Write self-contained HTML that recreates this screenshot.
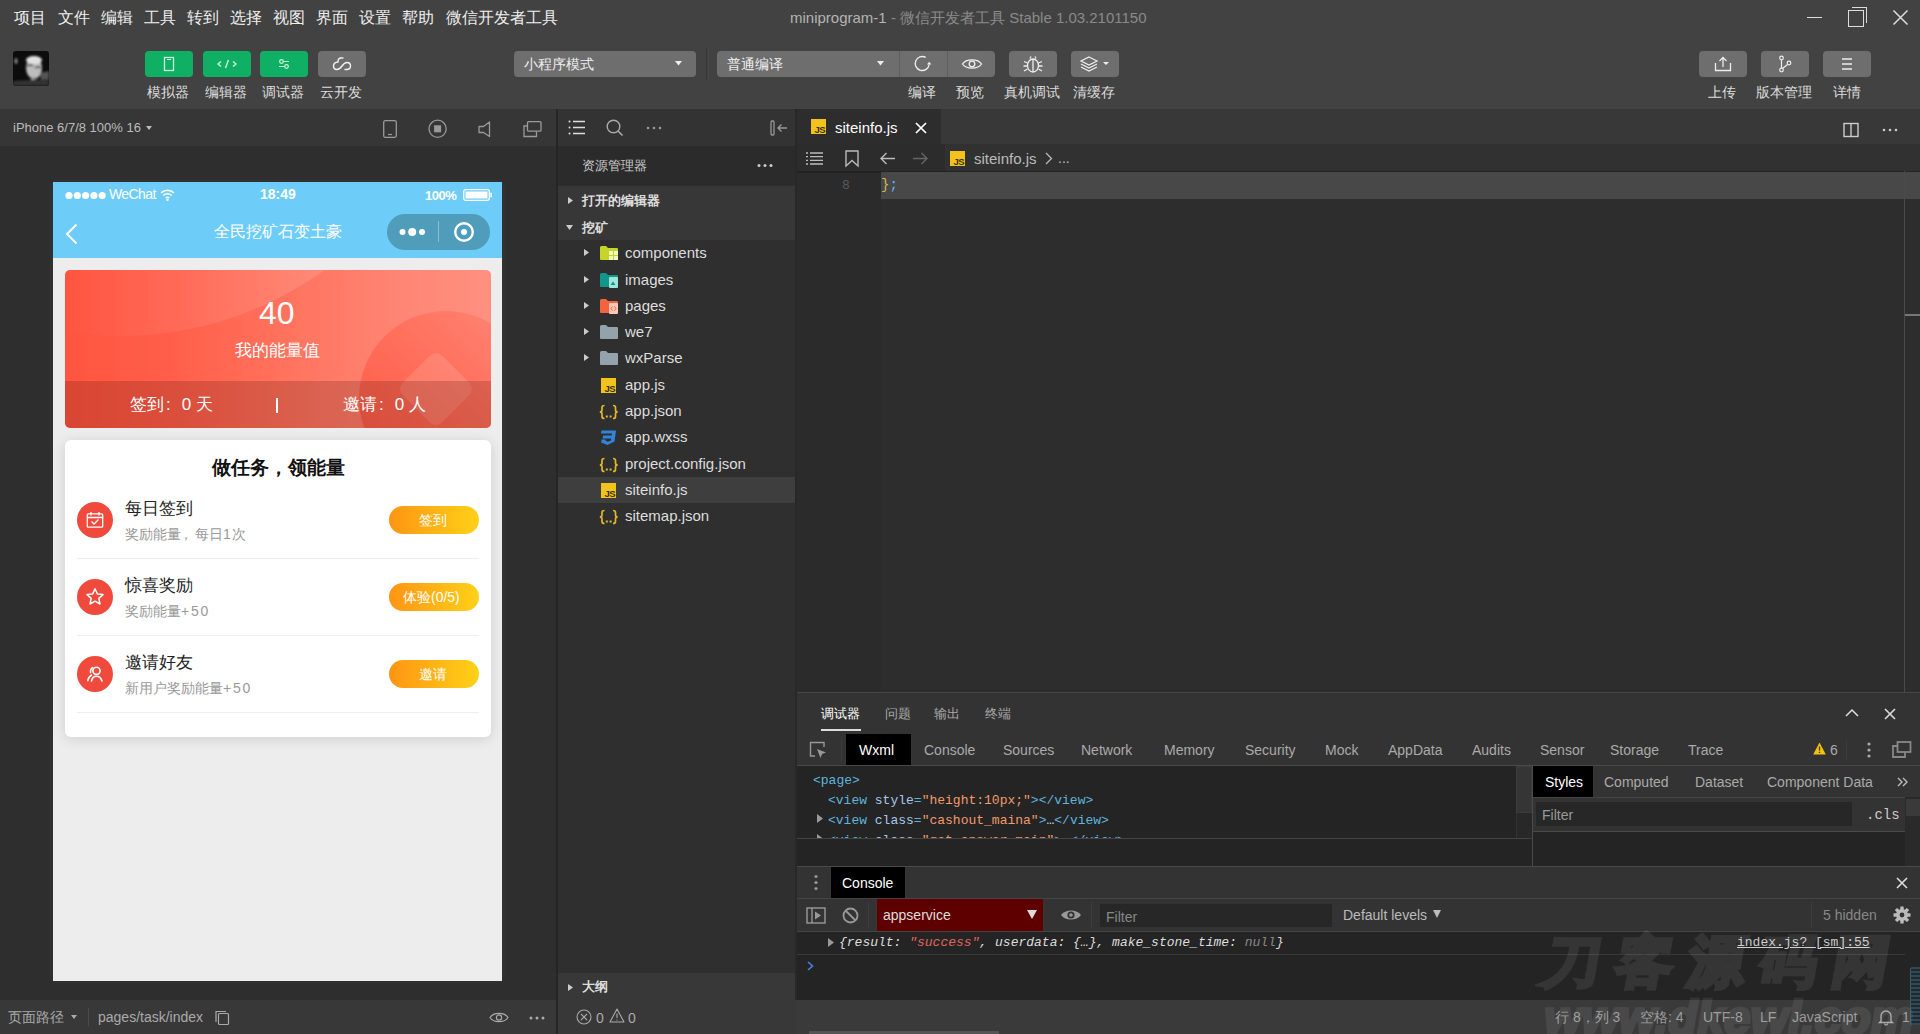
<!DOCTYPE html>
<html><head><meta charset="utf-8">
<style>
*{box-sizing:border-box;margin:0;padding:0}
html,body{width:1920px;height:1034px;overflow:hidden;background:#2d2d2d;font-family:"Liberation Sans",sans-serif;color:#ccc}
.a{position:absolute}
.t{position:absolute;white-space:nowrap;line-height:1}
svg.i{position:absolute;overflow:visible}
.menu{top:10px;font-size:15.8px;color:#eee}
.gbtn{position:absolute;top:51px;width:48px;height:26px;border-radius:4px;background:#10b064}
.hbtn{position:absolute;top:51px;height:26px;border-radius:4px;background:#6e6e6e}
.lbl{top:85px;font-size:14px;color:#ddd}
.mono{font-family:"Liberation Mono",monospace}
</style></head><body>
<!-- ============ TOP BAR ============ -->
<div class="a" style="left:0;top:0;width:1920px;height:109px;background:#424242"></div>
<div class="t menu" style="left:14px">项目</div>
<div class="t menu" style="left:58px">文件</div>
<div class="t menu" style="left:101px">编辑</div>
<div class="t menu" style="left:144px">工具</div>
<div class="t menu" style="left:187px">转到</div>
<div class="t menu" style="left:230px">选择</div>
<div class="t menu" style="left:273px">视图</div>
<div class="t menu" style="left:316px">界面</div>
<div class="t menu" style="left:359px">设置</div>
<div class="t menu" style="left:402px">帮助</div>
<div class="t menu" style="left:446px">微信开发者工具</div>
<div class="t" style="left:790px;top:10px;font-size:15px;color:#b4b4b4">miniprogram-1 <span style="color:#8a8a8a">- 微信开发者工具 Stable 1.03.2101150</span></div>
<!-- window controls -->
<div class="a" style="left:1807px;top:17px;width:15px;height:1px;background:#ddd"></div>
<div class="a" style="left:1848px;top:10px;width:16px;height:17px;border:1.5px solid #ddd"></div>
<div class="a" style="left:1852px;top:7px;width:15px;height:16px;border-top:1.5px solid #ddd;border-right:1.5px solid #ddd"></div>
<svg class="i" style="left:1893px;top:10px" width="15" height="15"><path d="M0.5 0.5L14.5 14.5M14.5 0.5L0.5 14.5" stroke="#ddd" stroke-width="1.5"/></svg>
<!-- avatar -->
<svg class="i" style="left:13px;top:51px" width="36" height="35"><defs><clipPath id="av"><rect width="36" height="35" rx="3"/></clipPath><filter id="bl"><feGaussianBlur stdDeviation="1.2"/></filter></defs><g clip-path="url(#av)"><rect width="36" height="35" fill="#0c0c0c"/><g filter="url(#bl)"><ellipse cx="21" cy="17" rx="8" ry="11" fill="#bdbdbd"/><ellipse cx="21" cy="9" rx="8" ry="4" fill="#e0e0e0"/><path d="M14 15Q18 13 20 15M22 17Q25 15 28 17" stroke="#333" stroke-width="1.5" fill="none"/><rect x="18" y="26" width="4" height="8" fill="#9a9a9a"/><path d="M27 22L36 20V28L28 30Z" fill="#555"/><path d="M0 30L36 28V35H0Z" fill="#333"/><ellipse cx="3" cy="10" rx="1.5" ry="3" fill="#888"/></g></g></svg>
<!-- green buttons -->
<div class="gbtn" style="left:145px"></div>
<div class="gbtn" style="left:203px"></div>
<div class="gbtn" style="left:260px"></div>
<div class="hbtn" style="left:318px;width:48px"></div>
<svg class="i" style="left:145px;top:51px" width="48" height="26"><rect x="19.5" y="6.5" width="9" height="13" fill="none" stroke="#c9f7de" stroke-width="1.3"/><line x1="22" y1="8.5" x2="26" y2="8.5" stroke="#c9f7de" stroke-width="1"/></svg>
<svg class="i" style="left:203px;top:51px" width="48" height="26"><path d="M18 10.5L15 13L18 15.5M30 10.5L33 13L30 15.5M25.5 9L22.5 17" fill="none" stroke="#c9f7de" stroke-width="1.4"/></svg>
<svg class="i" style="left:260px;top:51px" width="48" height="26"><path d="M19 10.5H29M19 15.5H29" stroke="#c9f7de" stroke-width="1.2"/><circle cx="21.5" cy="10.5" r="1.8" fill="#10b064" stroke="#c9f7de" stroke-width="1.2"/><circle cx="26.5" cy="15.5" r="1.8" fill="#10b064" stroke="#c9f7de" stroke-width="1.2"/></svg>
<svg class="i" style="left:316px;top:48px" width="52" height="32"><path d="M25 10Q22 10 22 14Q17.5 14.5 17.5 18Q17.5 21.5 21 21.5Q23.5 21.5 26 18Q28.5 14.5 31 14.5Q34.5 14.5 34.5 18Q34.5 21.5 30.5 21.5H28.5" fill="none" stroke="#f2f2f2" stroke-width="1.4" stroke-linejoin="round"/><path d="M24.5 10H27.5" stroke="#f2f2f2" stroke-width="1.4"/></svg>
<div class="t lbl" style="left:147px">模拟器</div>
<div class="t lbl" style="left:205px">编辑器</div>
<div class="t lbl" style="left:262px">调试器</div>
<div class="t lbl" style="left:320px">云开发</div>
<!-- mode dropdowns -->
<div class="hbtn" style="left:514px;width:182px"></div>
<div class="t" style="left:524px;top:57px;font-size:14px;color:#eee">小程序模式</div>
<svg class="i" style="left:675px;top:61px" width="7" height="5"><path d="M0 0H7L3.5 4.5Z" fill="#eee"/></svg>
<div class="a" style="left:706px;top:48px;width:1px;height:32px;background:#383838"></div><div class="a" style="left:708px;top:48px;width:1px;height:32px;background:#474747"></div>
<div class="hbtn" style="left:717px;width:278px"></div>
<div class="a" style="left:899px;top:51px;width:1px;height:26px;background:#5e5e5e"></div>
<div class="a" style="left:947px;top:51px;width:1px;height:26px;background:#5e5e5e"></div>
<div class="t" style="left:727px;top:57px;font-size:14px;color:#eee">普通编译</div>
<svg class="i" style="left:877px;top:61px" width="7" height="5"><path d="M0 0H7L3.5 4.5Z" fill="#eee"/></svg>
<svg class="i" style="left:914px;top:55px" width="20" height="18"><path d="M11.7 2.4A7 7 0 1 0 15.2 9.5" fill="none" stroke="#eee" stroke-width="1.3"/><path d="M15.2 6.8L13 9.6H17.4Z" fill="#eee"/></svg>
<svg class="i" style="left:961px;top:57px" width="22" height="14"><path d="M1.5 7C5 1.5 17 1.5 20.5 7C17 12.5 5 12.5 1.5 7Z" fill="none" stroke="#eee" stroke-width="1.3"/><circle cx="11" cy="7" r="2.8" fill="none" stroke="#eee" stroke-width="1.3"/></svg>
<div class="hbtn" style="left:1009px;width:48px"></div>
<svg class="i" style="left:1021px;top:54px" width="24" height="20"><ellipse cx="12" cy="11.5" rx="5.5" ry="6.5" fill="none" stroke="#eee" stroke-width="1.3"/><path d="M12 5V18M9 4.5L10 2.5M15 4.5L14 2.5M6.5 9L3 7.5M17.5 9L21 7.5M6.5 12H2.5M17.5 12H21.5M6.5 15L3 17M17.5 15L21 17" stroke="#eee" stroke-width="1.3"/></svg>
<div class="hbtn" style="left:1071px;width:48px"></div>
<svg class="i" style="left:1080px;top:55px" width="32" height="18"><path d="M9 2L17 6L9 10L1 6Z" fill="none" stroke="#eee" stroke-width="1.2"/><path d="M1 9L9 13L17 9M1 12L9 16L17 12" fill="none" stroke="#eee" stroke-width="1.2"/><path d="M23 7H29L26 10Z" fill="#eee"/></svg>
<div class="t lbl" style="left:908px">编译</div>
<div class="t lbl" style="left:956px">预览</div>
<div class="t lbl" style="left:1004px">真机调试</div>
<div class="t lbl" style="left:1073px">清缓存</div>
<!-- right buttons -->
<div class="hbtn" style="left:1699px;width:48px"></div>
<div class="hbtn" style="left:1761px;width:48px"></div>
<div class="hbtn" style="left:1823px;width:48px"></div>
<svg class="i" style="left:1699px;top:51px" width="48" height="26"><path d="M16.5 12V19.5H31.5V12M24 16V6.5M20.5 10L24 6.5L27.5 10" fill="none" stroke="#eee" stroke-width="1.3"/></svg>
<svg class="i" style="left:1761px;top:51px" width="48" height="26"><circle cx="20.5" cy="7" r="1.8" fill="none" stroke="#eee" stroke-width="1.2"/><circle cx="20.5" cy="19" r="1.8" fill="none" stroke="#eee" stroke-width="1.2"/><circle cx="28" cy="12" r="1.8" fill="none" stroke="#eee" stroke-width="1.2"/><path d="M20.5 9V17M21.5 17.5L26.5 13.5" stroke="#eee" stroke-width="1.2"/></svg>
<svg class="i" style="left:1823px;top:51px" width="48" height="26"><path d="M19 8H29M19 13H29M19 18H29" stroke="#eee" stroke-width="1.3"/></svg>
<div class="t lbl" style="left:1708px">上传</div>
<div class="t lbl" style="left:1756px">版本管理</div>
<div class="t lbl" style="left:1833px">详情</div>
<!-- ============ SIMULATOR ============ -->
<div class="a" style="left:0;top:109px;width:557px;height:891px;background:#2e2e2e"></div>
<div class="a" style="left:0;top:109px;width:557px;height:37px;background:#363636"></div>
<div class="a" style="left:556px;top:109px;width:2px;height:925px;background:#252525;z-index:2"></div>
<div class="t" style="left:13px;top:121px;font-size:13px;color:#bbb">iPhone 6/7/8 100% 16</div>
<svg class="i" style="left:146px;top:126px" width="6" height="5"><path d="M0 0H6L3 4Z" fill="#bbb"/></svg>
<svg class="i" style="left:383px;top:120px" width="14" height="18"><rect x="0.7" y="0.7" width="12.6" height="16.6" rx="1.5" fill="none" stroke="#9a9a9a" stroke-width="1.3"/><line x1="5" y1="14.5" x2="9" y2="14.5" stroke="#9a9a9a" stroke-width="1.2"/></svg>
<svg class="i" style="left:428px;top:119px" width="20" height="20"><circle cx="9.6" cy="9.8" r="8.6" fill="none" stroke="#9a9a9a" stroke-width="1.3"/><rect x="6.1" y="6.3" width="7" height="7" fill="#9a9a9a"/></svg>
<svg class="i" style="left:478px;top:121px" width="14" height="17"><path d="M11.5 1V15.5L5.5 11.5H1V5.5H5.5Z" fill="none" stroke="#9a9a9a" stroke-width="1.3" stroke-linejoin="round"/></svg>
<svg class="i" style="left:523px;top:121px" width="20" height="17"><rect x="4.5" y="0.7" width="13.5" height="9.5" rx="1" fill="none" stroke="#9a9a9a" stroke-width="1.3"/><path d="M4.5 5H1V15.5H13.5V10.5" fill="none" stroke="#9a9a9a" stroke-width="1.3"/></svg>
<!-- phone -->
<div class="a" style="left:53px;top:182px;width:449px;height:799px;background:#ededed;box-shadow:0 0 8px rgba(255,255,255,0.05)"></div>
<div class="a" style="left:53px;top:182px;width:449px;height:76px;background:#6ecdf8"></div>
<svg class="i" style="left:65px;top:191px" width="42" height="9"><circle cx="4" cy="4.5" r="3.6" fill="#fff"/><circle cx="12.3" cy="4.5" r="3.6" fill="#fff"/><circle cx="20.6" cy="4.5" r="3.6" fill="#fff"/><circle cx="28.9" cy="4.5" r="3.6" fill="#fff"/><circle cx="37.2" cy="4.5" r="3.6" fill="#fff"/></svg>
<div class="t" style="left:109px;top:187px;font-size:14px;color:#fff;letter-spacing:-0.6px">WeChat</div>
<svg class="i" style="left:160px;top:188px" width="15" height="13"><path d="M1 5A9 9 0 0 1 14 5M3.3 7.5A6 6 0 0 1 11.7 7.5M5.6 10A3 3 0 0 1 9.4 10" fill="none" stroke="#fff" stroke-width="1.6"/><circle cx="7.5" cy="11.8" r="1.2" fill="#fff"/></svg>
<div class="t" style="left:260px;top:187px;font-size:14px;color:#fff;font-weight:bold">18:49</div>
<div class="t" style="left:425px;top:189px;font-size:13px;color:#fff;font-weight:bold;letter-spacing:-0.5px">100%</div>
<svg class="i" style="left:463px;top:189px" width="30" height="12"><rect x="0.7" y="0.7" width="25.6" height="10.6" rx="2" fill="none" stroke="#fff" stroke-width="1.3"/><rect x="2.5" y="2.5" width="22" height="7" fill="#fff"/><rect x="27.2" y="3.8" width="1.8" height="4.4" fill="#fff"/></svg>
<svg class="i" style="left:65px;top:223px" width="13" height="22"><path d="M11.5 1.5L2 11L11.5 20.5" fill="none" stroke="#fff" stroke-width="2"/></svg>
<div class="t" style="left:214px;top:224px;font-size:15.6px;color:#fff">全民挖矿石变土豪</div>
<div class="a" style="left:387px;top:214px;width:103px;height:36px;border-radius:18px;background:#4f9cbb"></div>
<div class="a" style="left:438px;top:221px;width:1px;height:21px;background:rgba(255,255,255,0.35)"></div>
<svg class="i" style="left:399px;top:226px" width="30" height="12"><circle cx="3.5" cy="6" r="3" fill="#fff"/><circle cx="13.2" cy="6" r="4" fill="#fff"/><circle cx="23" cy="6" r="3" fill="#fff"/></svg>
<svg class="i" style="left:453px;top:221px" width="22" height="22"><circle cx="11" cy="11" r="8.8" fill="none" stroke="#fff" stroke-width="2.4"/><circle cx="11" cy="11" r="3" fill="#fff"/></svg>
<!-- red card -->
<div class="a" style="left:65px;top:270px;width:426px;height:158px;border-radius:5px;overflow:hidden;background:linear-gradient(90deg,#ff5540 0%,#ff5f4a 25%,#ff7560 55%,#ff8675 80%,#ff9080 100%)">
  <div class="a" style="left:-291px;top:-628px;width:694px;height:694px;border-radius:50%;background:linear-gradient(90deg,rgba(255,255,255,0) 42%,rgba(255,255,255,0.06) 55%,rgba(255,255,255,0.13) 80%)"></div>
  <div class="a" style="left:294px;top:41px;width:174px;height:174px;border-radius:50%;background:linear-gradient(45deg,#ff5843 0%,#ff6b57 45%,#ff8877 100%)"></div>
  <div class="a" style="left:343px;top:91px;width:56px;height:56px;transform:rotate(45deg);border-radius:9px;background:rgba(255,200,190,0.2)"></div>
  <div class="a" style="left:0;top:111px;width:426px;height:47px;background:rgba(70,10,0,0.20)"></div>
</div>
<div class="t" style="left:259px;top:297px;font-size:32px;color:#fff">40</div>
<div class="t" style="left:235px;top:342px;font-size:17px;color:#fff">我的能量值</div>
<div class="t" style="left:130px;top:396px;font-size:17px;color:#fff">签到<span style="margin-left:2px">:</span><span style="display:inline-block;margin-left:11px">0</span> 天</div>
<div class="a" style="left:276px;top:398px;width:2px;height:15px;background:#fff"></div>
<div class="t" style="left:343px;top:396px;font-size:17px;color:#fff">邀请<span style="margin-left:2px">:</span><span style="display:inline-block;margin-left:11px">0</span> 人</div>
<!-- task card -->
<div class="a" style="left:65px;top:440px;width:426px;height:297px;border-radius:6px;background:#fff;box-shadow:0 2px 14px rgba(0,0,0,0.13)"></div>
<div class="t" style="left:212px;top:458px;font-size:19px;color:#111;font-weight:bold">做任务<span style="letter-spacing:0">，</span>领能量</div>
<!-- row 1 -->
<div class="a" style="left:77px;top:502px;width:36px;height:36px;border-radius:50%;background:#ef4a3c"></div>
<svg class="i" style="left:86px;top:511px" width="18" height="18"><rect x="1.3" y="2.8" width="15.4" height="13.4" rx="1" fill="none" stroke="#fff" stroke-width="1.3"/><path d="M1.3 6.5H16.7M5 1V4.5M13 1V4.5M5.5 10.5L8 13L12.5 8.5" fill="none" stroke="#fff" stroke-width="1.3"/></svg>
<div class="t" style="left:125px;top:500px;font-size:16.5px;color:#222">每日签到</div>
<div class="t" style="left:125px;top:527px;font-size:14px;color:#999">奖励能量<span style="display:inline-block;width:14px;position:relative;left:-2px">，</span>每日<span style="letter-spacing:1px">1</span>次</div>
<div class="a" style="left:389px;top:506px;width:90px;height:28px;border-radius:14px;background:linear-gradient(90deg,#ff9513,#ffd118)"></div>
<div class="t" style="left:419px;top:513px;font-size:14px;color:#fff">签到</div>
<div class="a" style="left:77px;top:558px;width:402px;height:1px;background:#eee"></div>
<!-- row 2 -->
<div class="a" style="left:77px;top:579px;width:36px;height:36px;border-radius:50%;background:#ef4a3c"></div>
<svg class="i" style="left:85px;top:587px" width="20" height="20"><path d="M10 1.8L12.4 7L18 7.6L13.8 11.4L15 17L10 14.2L5 17L6.2 11.4L2 7.6L7.6 7Z" fill="none" stroke="#fff" stroke-width="1.5" stroke-linejoin="round"/></svg>
<div class="t" style="left:125px;top:577px;font-size:16.5px;color:#222">惊喜奖励</div>
<div class="t" style="left:125px;top:604px;font-size:14px;color:#999">奖励能量<span style="font-size:14px;letter-spacing:1.8px">+50</span></div>
<div class="a" style="left:389px;top:583px;width:90px;height:28px;border-radius:14px;background:linear-gradient(90deg,#ff9513,#ffd118)"></div>
<div class="t" style="left:403px;top:590px;font-size:14px;color:#fff">体验(0/5)</div>
<div class="a" style="left:77px;top:635px;width:402px;height:1px;background:#eee"></div>
<!-- row 3 -->
<div class="a" style="left:77px;top:656px;width:36px;height:36px;border-radius:50%;background:#ef4a3c"></div>
<svg class="i" style="left:85px;top:664px" width="20" height="20"><circle cx="11.5" cy="6.8" r="3.6" fill="none" stroke="#fff" stroke-width="1.6"/><path d="M6.5 17Q7.5 12.2 11.5 12.2Q15.5 12.2 17 17M7.6 3.6Q5 5 5.6 8.6M6.4 11.2Q3.4 12.8 2.8 16.6" fill="none" stroke="#fff" stroke-width="1.6" stroke-linecap="round"/></svg>
<div class="t" style="left:125px;top:654px;font-size:16.5px;color:#222">邀请好友</div>
<div class="t" style="left:125px;top:681px;font-size:14px;color:#999">新用户奖励能量<span style="font-size:14px;letter-spacing:1.8px">+50</span></div>
<div class="a" style="left:389px;top:660px;width:90px;height:28px;border-radius:14px;background:linear-gradient(90deg,#ff9513,#ffd118)"></div>
<div class="t" style="left:419px;top:667px;font-size:14px;color:#fff">邀请</div>
<div class="a" style="left:77px;top:712px;width:402px;height:1px;background:#eee"></div>
<!-- sim bottom bar -->
<div class="a" style="left:0;top:1000px;width:557px;height:34px;background:#383838"></div>
<div class="t" style="left:8px;top:1010px;font-size:14px;color:#aaa">页面路径</div>
<svg class="i" style="left:71px;top:1015px" width="6" height="5"><path d="M0 0H6L3 4Z" fill="#aaa"/></svg>
<div class="a" style="left:88px;top:1008px;width:1px;height:18px;background:#4a4a4a"></div>
<div class="t" style="left:98px;top:1010px;font-size:14px;color:#aaa">pages/task/index</div>
<svg class="i" style="left:215px;top:1010px" width="16" height="16"><rect x="3.5" y="3.5" width="10" height="11" rx="1" fill="none" stroke="#aaa" stroke-width="1.2"/><path d="M1 12V1.5H11" fill="none" stroke="#aaa" stroke-width="1.2"/></svg>
<svg class="i" style="left:489px;top:1011px" width="20" height="13"><path d="M1 6.5C4.5 1 15.5 1 19 6.5C15.5 12 4.5 12 1 6.5Z" fill="none" stroke="#aaa" stroke-width="1.2"/><circle cx="10" cy="6.5" r="2.6" fill="none" stroke="#aaa" stroke-width="1.2"/></svg>
<svg class="i" style="left:529px;top:1016px" width="16" height="4"><circle cx="2" cy="2" r="1.5" fill="#aaa"/><circle cx="8" cy="2" r="1.5" fill="#aaa"/><circle cx="14" cy="2" r="1.5" fill="#aaa"/></svg>
<!-- ============ EXPLORER ============ -->
<div class="a" style="left:557px;top:109px;width:239px;height:925px;background:#2f2f2f"></div>
<div class="a" style="left:557px;top:109px;width:239px;height:37px;background:#333"></div>
<div class="a" style="left:557px;top:146px;width:239px;height:39px;background:#2b2b2b"></div>
<div class="a" style="left:557px;top:186px;width:239px;height:54px;background:#373737"></div>
<svg class="i" style="left:568px;top:120px" width="18" height="15"><path d="M5 1.5H17M5 7.5H17M5 13.5H17" stroke="#ddd" stroke-width="1.4"/><circle cx="1.5" cy="1.5" r="1" fill="#ddd"/><circle cx="1.5" cy="7.5" r="1" fill="#ddd"/><circle cx="1.5" cy="13.5" r="1" fill="#ddd"/></svg>
<svg class="i" style="left:606px;top:119px" width="18" height="17"><circle cx="7.5" cy="7.5" r="6.3" fill="none" stroke="#aaa" stroke-width="1.4"/><path d="M12 12L16.5 16.5" stroke="#aaa" stroke-width="1.6"/></svg>
<svg class="i" style="left:646px;top:126px" width="16" height="4"><circle cx="2" cy="2" r="1.3" fill="#999"/><circle cx="8" cy="2" r="1.3" fill="#999"/><circle cx="14" cy="2" r="1.3" fill="#999"/></svg>
<svg class="i" style="left:770px;top:120px" width="18" height="16"><rect x="1" y="1" width="3" height="14" rx="1" fill="none" stroke="#999" stroke-width="1.3"/><path d="M17 8H8M11.5 4.5L8 8L11.5 11.5" fill="none" stroke="#999" stroke-width="1.3"/></svg>
<div class="t" style="left:582px;top:159px;font-size:13px;color:#ccc">资源管理器</div>
<svg class="i" style="left:757px;top:163px" width="16" height="5"><circle cx="2" cy="2.5" r="1.5" fill="#ccc"/><circle cx="8" cy="2.5" r="1.5" fill="#ccc"/><circle cx="14" cy="2.5" r="1.5" fill="#ccc"/></svg>
<svg class="i" style="left:568px;top:197px" width="5" height="7"><path d="M0 0L5 3.5L0 7Z" fill="#ccc"/></svg>
<div class="t" style="left:582px;top:194px;font-size:13px;color:#ddd;font-weight:bold">打开的编辑器</div>
<svg class="i" style="left:566px;top:225px" width="7" height="5"><path d="M0 0H7L3.5 5Z" fill="#ccc"/></svg>
<div class="t" style="left:582px;top:221px;font-size:13px;color:#ddd;font-weight:bold">挖矿</div>
<!-- tree -->
<div class="a" style="left:557px;top:477px;width:239px;height:26px;background:#3e3e3e"></div>
<svg class="i" style="left:584px;top:249px" width="5" height="7"><path d="M0 0L5 3.5L0 7Z" fill="#ccc"/></svg>
<svg class="i" style="left:584px;top:276px" width="5" height="7"><path d="M0 0L5 3.5L0 7Z" fill="#ccc"/></svg>
<svg class="i" style="left:584px;top:302px" width="5" height="7"><path d="M0 0L5 3.5L0 7Z" fill="#ccc"/></svg>
<svg class="i" style="left:584px;top:328px" width="5" height="7"><path d="M0 0L5 3.5L0 7Z" fill="#ccc"/></svg>
<svg class="i" style="left:584px;top:354px" width="5" height="7"><path d="M0 0L5 3.5L0 7Z" fill="#ccc"/></svg>
<!-- folder icons -->
<svg class="i" style="left:600px;top:246px" width="19" height="15"><path d="M0 1.5Q0 0 1.5 0H6L8 2H17Q18 2 18 3V13Q18 14 17 14H1Q0 14 0 13Z" fill="#c6d52e"/><rect x="9" y="5" width="4" height="4" fill="#f3f7c0"/><rect x="14" y="5" width="4" height="4" fill="#f3f7c0"/><rect x="9" y="10" width="4" height="4" fill="#f3f7c0"/><rect x="14" y="10" width="4" height="4" fill="#f3f7c0"/></svg>
<svg class="i" style="left:600px;top:273px" width="19" height="15"><path d="M0 1.5Q0 0 1.5 0H6L8 2H17Q18 2 18 3V13Q18 14 17 14H1Q0 14 0 13Z" fill="#12958a"/><rect x="9" y="4" width="9" height="11" rx="1" fill="#9ee6da"/><path d="M10.5 12L13 8.5L15.5 12Z" fill="#12958a"/></svg>
<svg class="i" style="left:600px;top:299px" width="19" height="15"><path d="M0 1.5Q0 0 1.5 0H6L8 2H17Q18 2 18 3V13Q18 14 17 14H1Q0 14 0 13Z" fill="#f2643e"/><rect x="9" y="4" width="9" height="11" rx="1" fill="#fcc7b5"/><path d="M12.5 7.5L11 9.5L12.5 11.5M14.5 7.5L16 9.5L14.5 11.5" fill="none" stroke="#f2643e" stroke-width="1"/></svg>
<svg class="i" style="left:600px;top:325px" width="19" height="15"><path d="M0 1.5Q0 0 1.5 0H6L8 2H17Q18 2 18 3V13Q18 14 17 14H1Q0 14 0 13Z" fill="#94a3ab"/></svg>
<svg class="i" style="left:600px;top:351px" width="19" height="15"><path d="M0 1.5Q0 0 1.5 0H6L8 2H17Q18 2 18 3V13Q18 14 17 14H1Q0 14 0 13Z" fill="#94a3ab"/></svg>
<!-- file icons -->
<svg class="i" style="left:601px;top:378px" width="15" height="15"><rect width="15" height="15" fill="#f2c31c"/><text x="14.2" y="13.8" font-size="9.5" font-family="Liberation Sans" font-weight="bold" fill="#3a3000" text-anchor="end" letter-spacing="-0.5">JS</text></svg>
<svg class="i" style="left:599px;top:404px" width="20" height="16"><path d="M5.5 1.5Q3 1.5 3 3.5V6Q3 8 0.8 8Q3 8 3 10V12.5Q3 14.5 5.5 14.5M14 1.5Q16.5 1.5 16.5 3.5V6Q16.5 8 18.7 8Q16.5 8 16.5 10V12.5Q16.5 14.5 14 14.5" fill="none" stroke="#e5b628" stroke-width="1.7"/><rect x="6.8" y="11.5" width="2" height="2" fill="#e5b628"/><rect x="10.6" y="11.5" width="2" height="2" fill="#e5b628"/></svg>
<svg class="i" style="left:600px;top:430px" width="17" height="16"><path d="M1.5 0.5H16L14.5 11.5L7.5 15L1 12.5L1.8 9.5H5.5L5.5 10.8L7.8 11.8L11 10.6L11.3 8.5H2.5L3.2 5.5H11.8L12.1 3.6H1Z" fill="#2f86d8"/></svg>
<svg class="i" style="left:599px;top:457px" width="20" height="16"><path d="M5.5 1.5Q3 1.5 3 3.5V6Q3 8 0.8 8Q3 8 3 10V12.5Q3 14.5 5.5 14.5M14 1.5Q16.5 1.5 16.5 3.5V6Q16.5 8 18.7 8Q16.5 8 16.5 10V12.5Q16.5 14.5 14 14.5" fill="none" stroke="#e5b628" stroke-width="1.7"/><rect x="6.8" y="11.5" width="2" height="2" fill="#e5b628"/><rect x="10.6" y="11.5" width="2" height="2" fill="#e5b628"/></svg>
<svg class="i" style="left:601px;top:483px" width="15" height="15"><rect width="15" height="15" fill="#f2c31c"/><text x="14.2" y="13.8" font-size="9.5" font-family="Liberation Sans" font-weight="bold" fill="#3a3000" text-anchor="end" letter-spacing="-0.5">JS</text></svg>
<svg class="i" style="left:599px;top:509px" width="20" height="16"><path d="M5.5 1.5Q3 1.5 3 3.5V6Q3 8 0.8 8Q3 8 3 10V12.5Q3 14.5 5.5 14.5M14 1.5Q16.5 1.5 16.5 3.5V6Q16.5 8 18.7 8Q16.5 8 16.5 10V12.5Q16.5 14.5 14 14.5" fill="none" stroke="#e5b628" stroke-width="1.7"/><rect x="6.8" y="11.5" width="2" height="2" fill="#e5b628"/><rect x="10.6" y="11.5" width="2" height="2" fill="#e5b628"/></svg>
<div class="t" style="left:625px;top:245px;font-size:15px;color:#ddd">components</div>
<div class="t" style="left:625px;top:272px;font-size:15px;color:#ddd">images</div>
<div class="t" style="left:625px;top:298px;font-size:15px;color:#ddd">pages</div>
<div class="t" style="left:625px;top:324px;font-size:15px;color:#ddd">we7</div>
<div class="t" style="left:625px;top:350px;font-size:15px;color:#ddd">wxParse</div>
<div class="t" style="left:625px;top:377px;font-size:15px;color:#ddd">app.js</div>
<div class="t" style="left:625px;top:403px;font-size:15px;color:#ddd">app.json</div>
<div class="t" style="left:625px;top:429px;font-size:15px;color:#ddd">app.wxss</div>
<div class="t" style="left:625px;top:456px;font-size:15px;color:#ddd">project.config.json</div>
<div class="t" style="left:625px;top:482px;font-size:15px;color:#ddd">siteinfo.js</div>
<div class="t" style="left:625px;top:508px;font-size:15px;color:#ddd">sitemap.json</div>
<!-- outline -->
<div class="a" style="left:557px;top:973px;width:239px;height:27px;background:#383838"></div>
<svg class="i" style="left:568px;top:984px" width="5" height="7"><path d="M0 0L5 3.5L0 7Z" fill="#ccc"/></svg>
<div class="t" style="left:582px;top:980px;font-size:13px;color:#ddd;font-weight:bold">大纲</div>
<div class="a" style="left:557px;top:1000px;width:239px;height:34px;background:#383838"></div>
<svg class="i" style="left:576px;top:1009px" width="16" height="16"><circle cx="8" cy="8" r="7" fill="none" stroke="#aaa" stroke-width="1.1"/><path d="M5 5L11 11M11 5L5 11" stroke="#aaa" stroke-width="1.1"/></svg>
<div class="t" style="left:596px;top:1011px;font-size:14px;color:#aaa">0</div>
<svg class="i" style="left:609px;top:1008px" width="16" height="16"><path d="M8 1L15 14H1Z" fill="none" stroke="#aaa" stroke-width="1.1" stroke-linejoin="round"/><path d="M8 5.5V10M8 11.5V12.5" stroke="#aaa" stroke-width="1.1"/></svg>
<div class="t" style="left:628px;top:1011px;font-size:14px;color:#aaa">0</div>
<!-- ============ EDITOR ============ -->
<div class="a" style="left:795px;top:109px;width:2px;height:891px;background:#282828;z-index:1"></div>
<div class="a" style="left:796px;top:109px;width:1124px;height:583px;background:#2d2d2d"></div>
<div class="a" style="left:796px;top:109px;width:1124px;height:35px;background:#383838"></div>
<div class="a" style="left:797px;top:109px;width:144px;height:35px;background:#2d2d2d"></div>
<svg class="i" style="left:811px;top:119px" width="15" height="15"><rect width="15" height="15" fill="#f2c31c"/><text x="14.2" y="13.8" font-size="9.5" font-family="Liberation Sans" font-weight="bold" fill="#3a3000" text-anchor="end" letter-spacing="-0.5">JS</text></svg>
<div class="t" style="left:835px;top:120px;font-size:15px;color:#fff">siteinfo.js</div>
<svg class="i" style="left:915px;top:122px" width="12" height="12"><path d="M1 1L11 11M11 1L1 11" stroke="#fff" stroke-width="1.7"/></svg>
<svg class="i" style="left:1843px;top:122px" width="16" height="16"><rect x="1" y="1.5" width="14" height="13" fill="none" stroke="#ccc" stroke-width="1.4"/><path d="M8 1.5V14.5" stroke="#ccc" stroke-width="1.4"/></svg>
<svg class="i" style="left:1882px;top:128px" width="16" height="4"><circle cx="2" cy="2" r="1.3" fill="#ccc"/><circle cx="8" cy="2" r="1.3" fill="#ccc"/><circle cx="14" cy="2" r="1.3" fill="#ccc"/></svg>
<div class="a" style="left:797px;top:144px;width:1123px;height:27px;background:#313131"></div>
<div class="a" style="left:797px;top:144px;width:148px;height:27px;background:#2c2c2c"></div>
<svg class="i" style="left:806px;top:152px" width="18" height="13"><path d="M4 1H17M4 4.7H17M4 8.3H17M4 12H17" stroke="#bbb" stroke-width="1.3"/><path d="M0 1H2M0 4.7H2M0 8.3H2M0 12H2" stroke="#bbb" stroke-width="1.3"/></svg>
<svg class="i" style="left:845px;top:150px" width="14" height="17"><path d="M1 1H13V16L7 10.5L1 16Z" fill="none" stroke="#bbb" stroke-width="1.4"/></svg>
<svg class="i" style="left:879px;top:152px" width="17" height="13"><path d="M16 6.5H2M7.5 1L2 6.5L7.5 12" fill="none" stroke="#bbb" stroke-width="1.4"/></svg>
<svg class="i" style="left:912px;top:152px" width="17" height="13"><path d="M1 6.5H15M9.5 1L15 6.5L9.5 12" fill="none" stroke="#666" stroke-width="1.4"/></svg>
<svg class="i" style="left:950px;top:151px" width="15" height="15"><rect width="15" height="15" fill="#f2c31c"/><text x="14.2" y="13.8" font-size="9.5" font-family="Liberation Sans" font-weight="bold" fill="#3a3000" text-anchor="end" letter-spacing="-0.5">JS</text></svg>
<div class="t" style="left:974px;top:151px;font-size:15px;color:#bbb">siteinfo.js</div>
<svg class="i" style="left:1045px;top:152px" width="8" height="13"><path d="M1 1L6.5 6.5L1 12" fill="none" stroke="#bbb" stroke-width="1.3"/></svg>
<div class="t" style="left:1058px;top:151px;font-size:14px;color:#bbb">...</div>
<div class="a" style="left:797px;top:171px;width:84px;height:521px;background:#2b2b2b"></div>
<div class="a" style="left:797px;top:171px;width:1123px;height:2px;background:rgba(0,0,0,0.22)"></div>
<div class="a" style="left:881px;top:172px;width:1039px;height:27px;background:#484848"></div>
<div class="t mono" style="left:842px;top:179px;font-size:13px;color:#5a5a5a">8</div>
<div class="t mono" style="left:881px;top:178px;font-size:14px;color:#d4b756">}<span style="color:#69b4f0">;</span></div>
<div class="a" style="left:1904px;top:171px;width:1px;height:521px;background:#4a4a4a"></div>
<div class="a" style="left:1905px;top:314px;width:15px;height:2px;background:#777"></div>

<!-- ============ DEBUGGER ============ -->
<div class="a" style="left:796px;top:692px;width:1124px;height:342px;background:#333"></div>
<div class="a" style="left:796px;top:692px;width:1124px;height:1px;background:#464646"></div>
<div class="t" style="left:821px;top:707px;font-size:13px;color:#fff">调试器</div>
<div class="t" style="left:885px;top:707px;font-size:13px;color:#aaa">问题</div>
<div class="t" style="left:934px;top:707px;font-size:13px;color:#aaa">输出</div>
<div class="t" style="left:985px;top:707px;font-size:13px;color:#aaa">终端</div>
<div class="a" style="left:821px;top:729px;width:40px;height:2px;background:#ddd"></div>
<svg class="i" style="left:1845px;top:708px" width="14" height="9"><path d="M1 8L7 2L13 8" fill="none" stroke="#ddd" stroke-width="1.5"/></svg>
<svg class="i" style="left:1884px;top:708px" width="12" height="12"><path d="M1 1L11 11M11 1L1 11" stroke="#ddd" stroke-width="1.6"/></svg>
<!-- devtools tabs -->
<div class="a" style="left:797px;top:765px;width:1123px;height:1px;background:#494949"></div>
<svg class="i" style="left:809px;top:741px" width="19" height="19"><path d="M6 15H1.5V1.5H15V6" fill="none" stroke="#999" stroke-width="1.4"/><path d="M8 8L17 11.5L13 13L11.5 17Z" fill="#999"/></svg>
<div class="a" style="left:841px;top:738px;width:1px;height:24px;background:#3c3c3c"></div>
<div class="a" style="left:846px;top:734px;width:65px;height:31px;background:#000"></div>
<div class="t" style="left:859px;top:743px;font-size:14px;color:#fff">Wxml</div>
<div class="t" style="left:924px;top:743px;font-size:14px;color:#aaa">Console</div>
<div class="t" style="left:1003px;top:743px;font-size:14px;color:#aaa">Sources</div>
<div class="t" style="left:1081px;top:743px;font-size:14px;color:#aaa">Network</div>
<div class="t" style="left:1164px;top:743px;font-size:14px;color:#aaa">Memory</div>
<div class="t" style="left:1245px;top:743px;font-size:14px;color:#aaa">Security</div>
<div class="t" style="left:1325px;top:743px;font-size:14px;color:#aaa">Mock</div>
<div class="t" style="left:1388px;top:743px;font-size:14px;color:#aaa">AppData</div>
<div class="t" style="left:1472px;top:743px;font-size:14px;color:#aaa">Audits</div>
<div class="t" style="left:1540px;top:743px;font-size:14px;color:#aaa">Sensor</div>
<div class="t" style="left:1610px;top:743px;font-size:14px;color:#aaa">Storage</div>
<div class="t" style="left:1688px;top:743px;font-size:14px;color:#aaa">Trace</div>
<svg class="i" style="left:1813px;top:742px" width="13" height="13"><path d="M6.5 0.5L12.8 12.5H0.2Z" fill="#f4c20d"/><path d="M6.5 4.5V8.5M6.5 9.8V11" stroke="#333" stroke-width="1.3"/></svg>
<div class="t" style="left:1830px;top:743px;font-size:14px;color:#aaa">6</div>
<div class="a" style="left:1846px;top:740px;width:1px;height:20px;background:#3c3c3c"></div>
<svg class="i" style="left:1867px;top:742px" width="4" height="16"><circle cx="2" cy="2" r="1.6" fill="#aaa"/><circle cx="2" cy="8" r="1.6" fill="#aaa"/><circle cx="2" cy="14" r="1.6" fill="#aaa"/></svg>
<svg class="i" style="left:1892px;top:741px" width="20" height="18"><rect x="5.5" y="1" width="13" height="10" fill="none" stroke="#888" stroke-width="1.8"/><path d="M5.5 5H1V16H13V11" fill="none" stroke="#888" stroke-width="1.8"/></svg>
<!-- wxml tree -->
<div class="a" style="left:797px;top:766px;width:736px;height:100px;background:#242424"></div>

<div class="a" style="left:797px;top:838px;width:736px;height:1px;background:#444"></div>
<div class="a" style="left:1516px;top:766px;width:16px;height:72px;background:#282828;border-left:1px solid #333"></div>
<div class="a" style="left:1516px;top:766px;width:16px;height:47px;background:#353535;border:1px solid #3c3c3c"></div>
<div class="a" style="left:1532px;top:766px;width:1px;height:100px;background:#4a4a4a"></div>
<div style="position:absolute;left:797px;top:768px;width:719px;height:70px;overflow:hidden">
<div class="t mono" style="left:16px;top:6px;font-size:13px;color:#5fb4dc">&lt;page&gt;</div>
<div class="t mono" style="left:31px;top:26px;font-size:13px;color:#5fb4dc">&lt;view <span style="color:#a9c7e8">style</span>=<span style="color:#f29a6a">"height:10px;"</span>&gt;&lt;/view&gt;</div>
<div class="t mono" style="left:31px;top:46px;font-size:13px;color:#5fb4dc">&lt;view <span style="color:#a9c7e8">class</span>=<span style="color:#f29a6a">"cashout_maina"</span>&gt;<span style="color:#ddd">…</span>&lt;/view&gt;</div>
<div class="t mono" style="left:31px;top:66px;font-size:13px;color:#5fb4dc">&lt;view <span style="color:#a9c7e8">class</span>=<span style="color:#f29a6a">"get_answer_main"</span>&gt;<span style="color:#ddd">…</span>&lt;/view&gt;</div>
<svg class="i" style="left:20px;top:46px" width="6" height="8"><path d="M0 0L6 4.5L0 9Z" fill="#999"/></svg>
<svg class="i" style="left:20px;top:66px" width="6" height="8"><path d="M0 0L6 4.5L0 9Z" fill="#999"/></svg>
</div>
<!-- styles pane -->
<div class="a" style="left:1533px;top:766px;width:372px;height:100px;background:#242424"></div>
<div class="a" style="left:1533px;top:766px;width:372px;height:65px;background:#333"></div>
<div class="a" style="left:1533px;top:797px;width:372px;height:1px;background:#444"></div>
<div class="a" style="left:1533px;top:831px;width:372px;height:1px;background:#4a4a4a"></div>
<div class="a" style="left:1533px;top:766px;width:60px;height:31px;background:#000"></div>
<div class="t" style="left:1545px;top:775px;font-size:14px;color:#fff">Styles</div>
<div class="t" style="left:1604px;top:775px;font-size:14px;color:#aaa">Computed</div>
<div class="t" style="left:1695px;top:775px;font-size:14px;color:#aaa">Dataset</div>
<div class="t" style="left:1767px;top:775px;font-size:14px;color:#aaa">Component Data</div>
<svg class="i" style="left:1897px;top:777px" width="11" height="10"><path d="M1 1L5 5L1 9M6 1L10 5L6 9" fill="none" stroke="#bbb" stroke-width="1.4"/></svg>
<div class="a" style="left:1536px;top:802px;width:316px;height:24px;background:#272727"></div>
<div class="t" style="left:1542px;top:808px;font-size:14px;color:#999">Filter</div>
<div class="t mono" style="left:1866px;top:808px;font-size:14px;color:#ccc">.cls</div>
<div class="a" style="left:1905px;top:797px;width:15px;height:69px;background:#2a2a2a"></div>
<div class="a" style="left:1906px;top:799px;width:14px;height:17px;background:#3a3a3a"></div>
<div class="a" style="left:797px;top:866px;width:1123px;height:1px;background:#4a4a4a"></div>
<!-- console drawer -->
<svg class="i" style="left:814px;top:874px" width="4" height="17"><circle cx="2" cy="2.5" r="1.6" fill="#999"/><circle cx="2" cy="8.5" r="1.6" fill="#999"/><circle cx="2" cy="14.5" r="1.6" fill="#999"/></svg>
<div class="a" style="left:831px;top:867px;width:74px;height:31px;background:#000"></div>
<div class="t" style="left:842px;top:876px;font-size:14px;color:#fff">Console</div>
<svg class="i" style="left:1896px;top:877px" width="12" height="12"><path d="M1 1L11 11M11 1L1 11" stroke="#ddd" stroke-width="1.6"/></svg>
<div class="a" style="left:797px;top:898px;width:1123px;height:1px;background:#444"></div>
<svg class="i" style="left:806px;top:907px" width="20" height="17"><rect x="1" y="1" width="18" height="15" fill="none" stroke="#999" stroke-width="1.4"/><path d="M6 1V16" stroke="#999" stroke-width="1.4"/><path d="M9 4.5L15 8.5L9 12.5Z" fill="#999"/></svg>
<svg class="i" style="left:842px;top:907px" width="17" height="17"><circle cx="8.5" cy="8.5" r="7" fill="none" stroke="#999" stroke-width="1.8"/><path d="M3.5 3.5L13.5 13.5" stroke="#999" stroke-width="1.8"/></svg>
<div class="a" style="left:868px;top:902px;width:1px;height:26px;background:#3c3c3c"></div>
<div class="a" style="left:877px;top:899px;width:166px;height:32px;background:#5e0000"></div>
<div class="t" style="left:883px;top:908px;font-size:14px;color:#ddd">appservice</div>
<svg class="i" style="left:1027px;top:910px" width="10" height="9"><path d="M0 0H10L5 9Z" fill="#ddd"/></svg>
<svg class="i" style="left:1060px;top:908px" width="22" height="14"><path d="M1 7C5 1 17 1 21 7C17 13 5 13 1 7Z" fill="#999"/><circle cx="11" cy="7" r="3.6" fill="#333"/><circle cx="11" cy="7" r="1.8" fill="#999"/></svg>
<div class="a" style="left:1091px;top:902px;width:1px;height:26px;background:#3c3c3c"></div>
<div class="a" style="left:1100px;top:904px;width:232px;height:23px;background:#272727"></div>
<div class="t" style="left:1106px;top:910px;font-size:14px;color:#888">Filter</div>
<div class="t" style="left:1343px;top:908px;font-size:14px;color:#bbb">Default levels</div>
<svg class="i" style="left:1433px;top:910px" width="8" height="8"><path d="M0 0H8L4 8Z" fill="#bbb"/></svg>
<div class="a" style="left:1811px;top:902px;width:1px;height:26px;background:#3c3c3c"></div>
<div class="t" style="left:1823px;top:908px;font-size:14px;color:#888">5 hidden</div>
<svg class="i" style="left:1893px;top:906px" width="18" height="18"><g fill="#bbb"><circle cx="9" cy="9" r="6"/><rect x="7.3" y="0.5" width="3.4" height="17" rx="0.5"/><rect x="7.3" y="0.5" width="3.4" height="17" rx="0.5" transform="rotate(45 9 9)"/><rect x="7.3" y="0.5" width="3.4" height="17" rx="0.5" transform="rotate(90 9 9)"/><rect x="7.3" y="0.5" width="3.4" height="17" rx="0.5" transform="rotate(135 9 9)"/></g><circle cx="9" cy="9" r="2.4" fill="#333"/></svg>
<div class="a" style="left:797px;top:931px;width:1123px;height:69px;background:#242424"></div>
<div class="a" style="left:797px;top:931px;width:1123px;height:1px;background:#444"></div>
<div class="a" style="left:797px;top:954px;width:1108px;height:1px;background:#3a3a3a"></div>
<svg class="i" style="left:828px;top:938px" width="6" height="9"><path d="M0 0L6 4.5L0 9Z" fill="#999"/></svg>
<div class="t mono" style="left:839px;top:936px;font-size:13px;color:#ddd;font-style:italic">{result: <span style="color:#e0655a">"success"</span>, userdat<span>a</span>: {…}, make_stone_time: <span style="color:#888">null</span>}</div>
<div class="t mono" style="left:1737px;top:936px;font-size:13px;color:#ccc;text-decoration:underline">index.js? [sm]:55</div>
<svg class="i" style="left:807px;top:961px" width="7" height="10"><path d="M1 1L5.5 5L1 9" fill="none" stroke="#4d7fe8" stroke-width="1.6"/></svg>

<!-- status bar -->
<div class="a" style="left:796px;top:1000px;width:1124px;height:34px;background:#3a3a3a"></div>
<div class="t" style="left:1555px;top:1010px;font-size:14px;color:#999">行 8，列 3</div>
<div class="t" style="left:1640px;top:1010px;font-size:14px;color:#999">空格: 4</div>
<div class="t" style="left:1703px;top:1010px;font-size:14px;color:#999">UTF-8</div>
<div class="t" style="left:1760px;top:1010px;font-size:14px;color:#999">LF</div>
<div class="t" style="left:1792px;top:1010px;font-size:14px;color:#999">JavaScript</div>
<svg class="i" style="left:1879px;top:1009px" width="14" height="16"><path d="M2 12V7A5 5 0 0 1 12 7V12L13.5 13.5H0.5Z" fill="none" stroke="#aaa" stroke-width="1.3"/><path d="M5.5 14.5A1.5 1.5 0 0 0 8.5 14.5" fill="none" stroke="#aaa" stroke-width="1.3"/></svg>
<div class="t" style="left:1902px;top:1010px;font-size:14px;color:#999">1</div>
<div class="a" style="left:809px;top:1031px;width:190px;height:3px;background:#555"></div>
<div class="a" style="left:1910px;top:967px;width:10px;height:58px;border-radius:3px 0 0 3px;background:repeating-linear-gradient(180deg,#2f4a55 0 2px,#1f2a30 2px 4px);border-left:1px solid #3a5a6a"></div>
<!-- watermark -->
<div class="a" style="left:0;top:0;width:1920px;height:1034px;opacity:0.075;pointer-events:none">
<div class="t" style="left:1545px;top:934px;font-size:56px;font-weight:bold;color:#fff;-webkit-text-stroke:4px #fff;transform:skewX(-10deg);letter-spacing:16px">刀客源码网</div>
<div class="t" style="left:1545px;top:994px;font-size:48px;font-weight:bold;color:#fff;-webkit-text-stroke:3px #fff;transform:skewX(-10deg);letter-spacing:0px">www.dkewl.com</div>
</div>
</body></html>
